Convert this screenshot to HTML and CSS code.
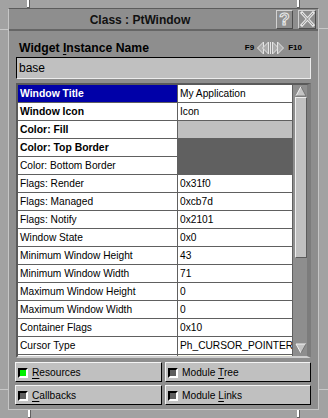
FILE: index.html
```html
<!DOCTYPE html>
<html>
<head>
<meta charset="utf-8">
<link rel="stylesheet" href="styles.css">
</head>
<body>
<div class="frame">
  <span class="notch v" style="left:27px;top:0"></span>
  <span class="notch v" style="left:297px;top:0"></span>
  <span class="notch v" style="left:28px;top:410px"></span>
  <span class="notch v" style="left:297px;top:410px"></span>
  <span class="notch h" style="left:0;top:29px"></span>
  <span class="notch h" style="left:319px;top:28px"></span>
  <span class="notch h" style="left:0;top:389px"></span>
  <span class="notch h" style="left:319px;top:389px"></span>
  <div class="win">
    <div class="titlebar">
      <div class="title">Class : PtWindow</div>
      <div class="tbtn q">?</div>
      <div class="tbtn x">
        <svg width="15" height="16" viewBox="0 0 15 16">
          <path d="M2 2 L13 14 M13 2 L2 14" stroke="#e6e6e6" stroke-width="3" stroke-linecap="square" fill="none"/>
          <path d="M2 2 L13 14 M13 2 L2 14" stroke="#8e8e8e" stroke-width="1" fill="none"/>
        </svg>
      </div>
    </div>
    <div class="body">
      <div class="namerow">
        <div class="label">Widget <u>I</u>nstance Name</div>
        <div class="nav">
          <span class="fk">F9</span>
          <svg width="28" height="14" viewBox="0 0 28 14">
            <polygon points="0.5,7 6.5,1 6.5,13" fill="#ababab" stroke="#e4e4e4" stroke-width="1"/>
            <polygon points="5.5,7 11.5,1 11.5,13" fill="#ababab" stroke="#e4e4e4" stroke-width="1"/>
            <rect x="13" y="1" width="1" height="12" fill="#e4e4e4"/>
            <polygon points="15.5,1 21.5,7 15.5,13" fill="#ababab" stroke="#e4e4e4" stroke-width="1"/>
            <polygon points="20.5,1 26.5,7 20.5,13" fill="#ababab" stroke="#e4e4e4" stroke-width="1"/>
          </svg>
          <span class="fk">F10</span>
        </div>
      </div>
      <div class="input">base</div>
      <div class="table">
        <div class="rows">
          <div class="row sel"><div class="k b">Window Title</div><div class="v">My Application</div></div>
          <div class="row"><div class="k b">Window Icon</div><div class="v">Icon</div></div>
          <div class="row"><div class="k b">Color: Fill</div><div class="v fill"></div></div>
          <div class="row"><div class="k b">Color: Top Border</div><div class="v dark top"></div></div>
          <div class="row"><div class="k">Color: Bottom Border</div><div class="v dark"></div></div>
          <div class="row"><div class="k">Flags: Render</div><div class="v">0x31f0</div></div>
          <div class="row"><div class="k">Flags: Managed</div><div class="v">0xcb7d</div></div>
          <div class="row"><div class="k">Flags: Notify</div><div class="v">0x2101</div></div>
          <div class="row"><div class="k">Window State</div><div class="v">0x0</div></div>
          <div class="row"><div class="k">Minimum Window Height</div><div class="v">43</div></div>
          <div class="row"><div class="k">Minimum Window Width</div><div class="v">71</div></div>
          <div class="row"><div class="k">Maximum Window Height</div><div class="v">0</div></div>
          <div class="row"><div class="k">Maximum Window Width</div><div class="v">0</div></div>
          <div class="row"><div class="k">Container Flags</div><div class="v">0x10</div></div>
          <div class="row"><div class="k">Cursor Type</div><div class="v">Ph_CURSOR_POINTER</div></div>
          <div class="row"><div class="k"></div><div class="v pale"></div></div>
        </div>
        <div class="scroll">
          <div class="arrow up">
            <svg width="12" height="12" viewBox="0 0 12 12">
              <polygon points="1,11 6,1.5 11,11" fill="#c4c4c4"/>
              <path d="M1 11 L6 1.5" stroke="#f2f2f2" stroke-width="1"/>
              <path d="M6 1.5 L11 11 L1 11" stroke="#6a6a6a" stroke-width="0.8" fill="none"/>
            </svg>
          </div>
          <div class="thumb"></div>
          <div class="trough"></div>
          <div class="arrow down">
            <svg width="12" height="14" viewBox="0 0 12 14">
              <polygon points="1,3 11,3 6,12" fill="#c4c4c4"/>
              <path d="M1 3 L11 3 M1 3 L6 12" stroke="#f2f2f2" stroke-width="1"/>
              <path d="M11 3 L6 12" stroke="#6a6a6a" stroke-width="0.8"/>
            </svg>
          </div>
        </div>
      </div>
      <div class="buttons">
        <div class="btn"><span class="ind on"></span><span class="bl"><u>R</u>esources</span></div>
        <div class="btn"><span class="ind"></span><span class="bl">Module <u>T</u>ree</span></div>
        <div class="btn"><span class="ind"></span><span class="bl"><u>C</u>allbacks</span></div>
        <div class="btn"><span class="ind"></span><span class="bl">Module <u>L</u>inks</span></div>
      </div>
    </div>
  </div>
</div>
</body>
</html>
```
FILE: styles.css
```css
* { box-sizing: border-box; }
html, body { margin: 0; padding: 0; }
body {
  width: 328px;
  height: 418px;
  overflow: hidden;
  font-family: "Liberation Sans", Arial, sans-serif;
  background: #a2a2a2;
}
.frame {
  position: relative;
  width: 328px;
  height: 418px;
  padding: 8px 9px 8px 8px;
  background: #a2a2a2;
}
.notch { position: absolute; background: #c8c8c8; }
.notch.v { width: 1px; height: 8px; }
.notch.h { width: 9px; height: 1px; }
.win {
  height: 402px;
  background: #8e8e8e;
  border-top: 1px solid #5c5c5c;
  border-left: 1px solid #c6c6c6;
  border-right: 1px solid #c6c6c6;
  border-bottom: 1px solid #c6c6c6;
  display: flex;
  flex-direction: column;
}
.titlebar {
  height: 22px;
  flex: none;
  display: flex;
  align-items: center;
  padding-right: 2px;
  border-bottom: 2px solid #666;
}
.title {
  flex: 1;
  text-align: center;
  font-weight: bold;
  font-size: 12px;
  line-height: 20px;
  padding-top: 2px;
  color: #111;
}
.tbtn {
  width: 17px;
  height: 19px;
  margin-left: 5px;
  border-top: 1px solid #d2d2d2;
  border-left: 1px solid #d2d2d2;
  border-right: 1px solid #4e4e4e;
  border-bottom: 1px solid #4e4e4e;
  display: flex;
  align-items: center;
  justify-content: center;
}
.tbtn.q {
  font-family: "Liberation Sans", sans-serif;
  font-size: 17px;
  font-weight: bold;
  color: #8e8e8e;
  -webkit-text-stroke: 1px #e8e8e8;
  line-height: 17px;
}
.tbtn.x { width: 18px; }
.body {
  flex: 1;
  padding: 9px 7px 4px 7px;
  display: flex;
  flex-direction: column;
}
.namerow {
  height: 15px;
  display: flex;
  align-items: flex-start;
  justify-content: space-between;
}
.label {
  font-weight: bold;
  font-size: 12.2px;
  line-height: 18px;
  margin-top: -1px;
  padding-left: 3px;
  color: #000;
}
.label u { text-underline-offset: 2px; }
.nav {
  display: flex;
  align-items: center;
  gap: 3px;
  margin-right: 9px;
  margin-top: 1px;
}
.fk {
  font-size: 8px;
  font-weight: bold;
  color: #000;
  line-height: 14px;
}
.input {
  margin-top: 2px;
  height: 22px;
  background: #c0c0c0;
  border-top: 1px solid #000;
  border-left: 1px solid #000;
  border-right: 1px solid #ececec;
  border-bottom: 1px solid #ececec;
  font-size: 12px;
  line-height: 20px;
  padding-left: 2px;
  color: #000;
}
.table {
  margin-top: 4px;
  height: 275px;
  display: flex;
  border-top: 2px solid #5a5a5a;
  border-left: 2px solid #5a5a5a;
  border-bottom: 2px solid #cfcfcf;
  border-right: 4px solid #7c7c7c;
}
.rows {
  width: 275px;
  height: 271px;
  overflow: hidden;
  flex: none;
}
.row {
  display: grid;
  grid-template-columns: 160px 115px;
  height: 18px;
}
.k, .v {
  height: 18px;
  border-bottom: 1px solid #606060;
  border-right: 1px solid #606060;
  background: #fff;
  font-size: 10.2px;
  line-height: 17px;
  padding-left: 2px;
  white-space: nowrap;
  overflow: hidden;
  color: #000;
}
.k.b { font-weight: bold; font-size: 10.4px; }
.row.sel .k { background: #0000a8; color: #fff; }
.v.fill { background: #c0c0c0; }
.v.dark { background: #606060; }
.v.dark.top { border-bottom-color: #606060; }
.v.pale { background: #fffff0; }
.scroll {
  margin-left: 2px;
  width: 12px;
  height: 271px;
  display: flex;
  flex-direction: column;
  background: #8e8e8e;
}
.arrow { display: flex; justify-content: center; }
.arrow.up { height: 12px; align-items: flex-end; }
.arrow.down { height: 16px; align-items: flex-start; padding-top: 1px; }
.thumb {
  height: 161px;
  background: #c0c0c0;
  border-top: 1px solid #eeeeee;
  border-left: 1px solid #eeeeee;
  border-right: 1px solid #5c5c5c;
  border-bottom: 1px solid #5c5c5c;
}
.trough { height: 82px; }
.buttons {
  margin-top: 4px;
  margin-left: -1px;
  display: grid;
  grid-template-columns: 147px 146px;
  grid-auto-rows: 20px;
  gap: 3px;
}
.btn {
  background: #c0c0c0;
  border-top: 1px solid #f4f4f4;
  border-left: 1px solid #f4f4f4;
  border-right: 1px solid #000;
  border-bottom: 1px solid #000;
  display: flex;
  align-items: center;
  padding-left: 2px;
}
.ind {
  width: 10px;
  height: 10px;
  flex: none;
  margin-top: 1px;
  border-top: 2px solid #000;
  border-left: 2px solid #000;
  border-right: 2px solid #fff;
  border-bottom: 2px solid #fff;
  background: #5e5e5e;
}
.ind.on { background: #00f000; }
.bl {
  margin-left: 4px;
  font-size: 10.2px;
  line-height: 14px;
  padding-top: 1px;
  color: #000;
}
.bl u { text-underline-offset: 2px; }
```
